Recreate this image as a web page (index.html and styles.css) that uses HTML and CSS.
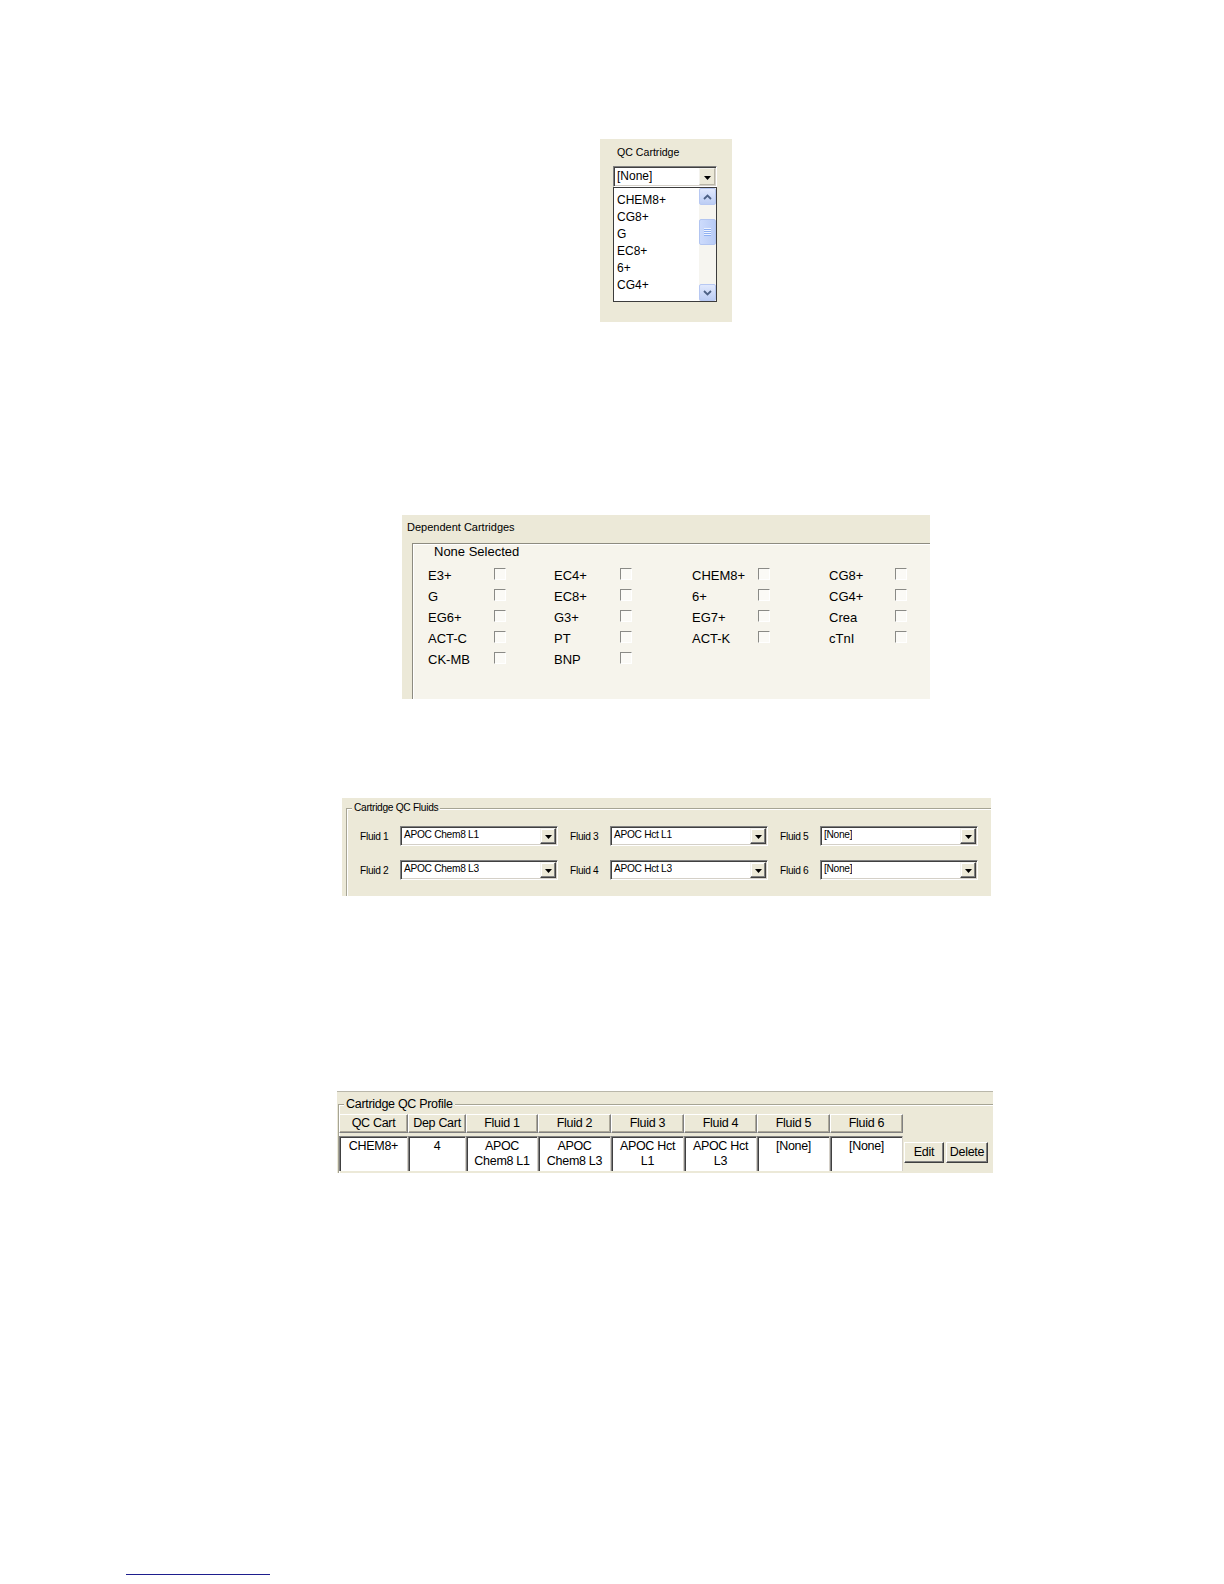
FILE: index.html
```html
<!DOCTYPE html>
<html lang="en">
<head>
<meta charset="utf-8">
<title>Cartridge QC</title>
<link rel="stylesheet" href="styles.css">
</head>
<body>
<main class="page">

  <section class="panel qc">
    <div class="qc-label">QC Cartridge</div>
    <div class="combo qc-combo">
      <span class="combo-text">[None]</span>
      <span class="dd-btn"><svg width="7" height="4" viewBox="0 0 7 4"><path d="M0 0H7L3.5 4Z"/></svg></span>
    </div>
    <div class="listbox">
      <ul class="list-items">
        <li>CHEM8+</li>
        <li>CG8+</li>
        <li>G</li>
        <li>EC8+</li>
        <li>6+</li>
        <li>CG4+</li>
      </ul>
      <div class="vscroll">
        <div class="sb-btn"><svg width="9" height="6" viewBox="0 0 9 6"><path d="M1 5L4.5 1.5L8 5" fill="none" stroke="#4d6185" stroke-width="1.8"/></svg></div>
        <div class="sb-track"><div class="sb-thumb"><span></span><span></span><span></span><span></span></div></div>
        <div class="sb-btn"><svg width="9" height="6" viewBox="0 0 9 6"><path d="M1 1L4.5 4.5L8 1" fill="none" stroke="#4d6185" stroke-width="1.8"/></svg></div>
      </div>
    </div>
  </section>

  <section class="panel dep">
    <div class="dep-title">Dependent Cartridges</div>
    <div class="dep-frame">
      <div class="dep-none">None Selected</div>
      <div class="dep-grid">
        <div class="opt"><span class="opt-name">E3+</span><span class="cb"></span></div>
        <div class="opt"><span class="opt-name">EC4+</span><span class="cb"></span></div>
        <div class="opt"><span class="opt-name">CHEM8+</span><span class="cb"></span></div>
        <div class="opt"><span class="opt-name">CG8+</span><span class="cb"></span></div>
        <div class="opt"><span class="opt-name">G</span><span class="cb"></span></div>
        <div class="opt"><span class="opt-name">EC8+</span><span class="cb"></span></div>
        <div class="opt"><span class="opt-name">6+</span><span class="cb"></span></div>
        <div class="opt"><span class="opt-name">CG4+</span><span class="cb"></span></div>
        <div class="opt"><span class="opt-name">EG6+</span><span class="cb"></span></div>
        <div class="opt"><span class="opt-name">G3+</span><span class="cb"></span></div>
        <div class="opt"><span class="opt-name">EG7+</span><span class="cb"></span></div>
        <div class="opt"><span class="opt-name">Crea</span><span class="cb"></span></div>
        <div class="opt"><span class="opt-name">ACT-C</span><span class="cb"></span></div>
        <div class="opt"><span class="opt-name">PT</span><span class="cb"></span></div>
        <div class="opt"><span class="opt-name">ACT-K</span><span class="cb"></span></div>
        <div class="opt"><span class="opt-name">cTnI</span><span class="cb"></span></div>
        <div class="opt"><span class="opt-name">CK-MB</span><span class="cb"></span></div>
        <div class="opt"><span class="opt-name">BNP</span><span class="cb"></span></div>
      </div>
    </div>
  </section>

  <section class="panel fluids">
    <fieldset class="gbox fl-box">
      <legend>Cartridge QC Fluids</legend>
      <div class="fl-grid">
        <div class="fl-field"><span class="fl-label">Fluid 1</span><div class="combo fl-combo"><span class="combo-text">APOC Chem8 L1</span><span class="dd-btn"><svg width="7" height="4" viewBox="0 0 7 4"><path d="M0 0H7L3.5 4Z"/></svg></span></div></div>
        <div class="fl-field"><span class="fl-label">Fluid 3</span><div class="combo fl-combo"><span class="combo-text">APOC Hct L1</span><span class="dd-btn"><svg width="7" height="4" viewBox="0 0 7 4"><path d="M0 0H7L3.5 4Z"/></svg></span></div></div>
        <div class="fl-field"><span class="fl-label">Fluid 5</span><div class="combo fl-combo"><span class="combo-text">[None]</span><span class="dd-btn"><svg width="7" height="4" viewBox="0 0 7 4"><path d="M0 0H7L3.5 4Z"/></svg></span></div></div>
        <div class="fl-field"><span class="fl-label">Fluid 2</span><div class="combo fl-combo"><span class="combo-text">APOC Chem8 L3</span><span class="dd-btn"><svg width="7" height="4" viewBox="0 0 7 4"><path d="M0 0H7L3.5 4Z"/></svg></span></div></div>
        <div class="fl-field"><span class="fl-label">Fluid 4</span><div class="combo fl-combo"><span class="combo-text">APOC Hct L3</span><span class="dd-btn"><svg width="7" height="4" viewBox="0 0 7 4"><path d="M0 0H7L3.5 4Z"/></svg></span></div></div>
        <div class="fl-field"><span class="fl-label">Fluid 6</span><div class="combo fl-combo"><span class="combo-text">[None]</span><span class="dd-btn"><svg width="7" height="4" viewBox="0 0 7 4"><path d="M0 0H7L3.5 4Z"/></svg></span></div></div>
      </div>
    </fieldset>
  </section>

  <section class="panel profile">
    <fieldset class="gbox pr-box">
      <legend>Cartridge QC Profile</legend>
      <div class="pr-head">
        <div class="th">QC Cart</div>
        <div class="th">Dep Cart</div>
        <div class="th">Fluid 1</div>
        <div class="th">Fluid 2</div>
        <div class="th">Fluid 3</div>
        <div class="th">Fluid 4</div>
        <div class="th">Fluid 5</div>
        <div class="th">Fluid 6</div>
      </div>
      <div class="pr-row">
        <div class="pr-cells">
          <div class="td">CHEM8+</div>
          <div class="td">4</div>
          <div class="td">APOC<br>Chem8 L1</div>
          <div class="td">APOC<br>Chem8 L3</div>
          <div class="td">APOC Hct<br>L1</div>
          <div class="td">APOC Hct<br>L3</div>
          <div class="td">[None]</div>
          <div class="td">[None]</div>
        </div>
        <div class="pr-btns">
          <button class="btn btn-edit">Edit</button>
          <button class="btn btn-delete">Delete</button>
        </div>
      </div>
    </fieldset>
  </section>

  <div class="foot-rule"></div>
</main>
</body>
</html>
```

FILE: styles.css
```css
* { box-sizing: border-box; }
html, body { margin: 0; padding: 0; background: #fff; }
body {
  width: 1224px;
  height: 1584px;
  overflow: hidden;
  font-family: "Liberation Sans", Arial, sans-serif;
  color: #000;
}
.page {
  display: flex;
  flex-direction: column;
  align-items: flex-start;
  padding-top: 139px;
}
.panel { background: #ECE9D8; flex: none; }

/* ---------- shared combo ---------- */
.combo {
  display: flex;
  align-items: flex-start;
  justify-content: space-between;
  background: #fff;
  border: 1px solid;
  border-color: #808080 #fff #fff #808080;
  box-shadow: inset 1px 1px 0 #404040, inset -1px -1px 0 #d4d0c8;
  padding: 1px;
}
.combo-text { padding-left: 2px; white-space: nowrap; overflow: hidden; }
.dd-btn {
  flex: none;
  width: 16px;
  height: 16px;
  display: flex;
  align-items: center;
  justify-content: center;
  background: #ECE9D8;
  border: 1px solid;
  border-color: #f4f3ee #404040 #404040 #f4f3ee;
  box-shadow: inset -1px -1px 0 #808080, inset 1px 1px 0 #fff;
}
.dd-btn svg { display: block; margin-top: 2px; }

/* ---------- QC Cartridge ---------- */
.qc {
  margin-left: 600px;
  width: 132px;
  height: 183px;
  padding: 6px 0 0 13px;
}
.qc-label {
  font-size: 10.6px;
  line-height: 14px;
  height: 21px;
  padding-left: 4px;
}
.qc-combo { width: 104px; height: 21px; font-size: 12px; line-height: 17px; }
.qc-combo .dd-btn { height: 17px; border-color: #f4f3ee #b8b5a6 #b8b5a6 #f4f3ee; box-shadow: none; }
.listbox {
  width: 104px;
  height: 115px;
  border: 1px solid #3c3c3c;
  background: #fff;
  display: flex;
}
.list-items {
  list-style: none;
  margin: 0;
  padding: 4px 0 0 3px;
  flex: 1;
  font-size: 12px;
  line-height: 17px;
}
.vscroll {
  width: 17px;
  display: flex;
  flex-direction: column;
  background: #f6f5f0;
}
.sb-btn {
  height: 17px;
  display: flex;
  align-items: center;
  justify-content: center;
  background: linear-gradient(#e1e9fd, #bccdf4);
  border: 1px solid #b7c8f2;
  border-radius: 2px;
}
.sb-track { flex: 1; padding-top: 14px; }
.sb-thumb {
  height: 26px;
  background: linear-gradient(90deg, #cddbfc, #b9ccf6);
  border: 1px solid #b2c5f1;
  border-radius: 2px;
  display: flex;
  flex-direction: column;
  align-items: center;
  justify-content: center;
}
.sb-thumb span {
  width: 7px;
  height: 2px;
  background: #eef3fe;
  border-bottom: 1px solid #8fb0f2;
}

/* ---------- Dependent Cartridges ---------- */
.dep {
  margin-top: 193px;
  margin-left: 402px;
  width: 528px;
  height: 184px;
  padding-top: 5px;
  display: flex;
  flex-direction: column;
}
.dep-title {
  font-size: 11px;
  line-height: 14px;
  height: 23px;
  padding-left: 5px;
}
.dep-frame {
  flex: 1;
  margin-left: 10px;
  background: #f6f4ec;
  border-top: 1px solid #8d8b80;
  border-left: 1px solid #8d8b80;
  box-shadow: inset 1px 1px 0 #fff;
  padding-left: 15px;
}
.dep-none { font-size: 13px; line-height: 16px; margin-left: 6px; }
.dep-grid {
  display: grid;
  grid-template-columns: 126px 138px 137px 1fr;
  grid-auto-rows: 21px;
  margin-top: 5px;
  font-size: 13px;
}
.opt { display: flex; align-items: center; }
.opt-name { width: 66px; line-height: 16px; }
.cb {
  width: 12px;
  height: 12px;
  margin-top: -3px;
  background: #fbfaf6;
  border: 1px solid;
  border-color: #8a8a86 #fff #fff #8a8a86;
}

/* ---------- group boxes ---------- */
.gbox {
  margin: 0;
  padding: 0;
  border: 0;
  border-top: 1px solid #a6a494;
  border-left: 1px solid #a6a494;
  box-shadow: inset 1px 1px 0 #fff;
  min-width: 0;
}
.gbox legend {
  background: #ECE9D8;
  padding: 0 2px;
  margin-left: 5px;
}

/* ---------- Cartridge QC Fluids ---------- */
.fluids {
  margin-top: 99px;
  margin-left: 342px;
  width: 649px;
  height: 98px;
  padding: 4px 0 0 4px;
  font-size: 10.2px;
  letter-spacing: -0.3px;
}
.fl-box { height: 94px; }
.fl-box legend { line-height: 12px; }
.fl-grid {
  display: grid;
  grid-template-columns: repeat(3, 198px);
  grid-auto-rows: 20px;
  column-gap: 12px;
  row-gap: 14px;
  padding: 12px 0 0 13px;
}
.fl-field { display: flex; align-items: center; }
.fl-label { width: 40px; }
.fl-combo { width: 158px; height: 20px; line-height: 13px; }

/* ---------- Cartridge QC Profile ---------- */
.profile {
  margin-top: 195px;
  margin-left: 337px;
  width: 656px;
  height: 82px;
  padding: 5px 0 0 1px;
  border-top: 1px solid #b9b7aa;
  font-size: 12.5px;
  letter-spacing: -0.3px;
}
.pr-box { height: 76px; }
.pr-box legend { line-height: 14px; }
.pr-head, .pr-cells {
  display: grid;
  grid-template-columns: 69px 58px 72px repeat(5, 73px);
}
.pr-head { margin-top: 3px; height: 19px; }
.th {
  line-height: 17px;
  text-align: center;
  white-space: nowrap;
  background: #ECE9D8;
  border: 1px solid;
  border-color: #fff #808080 #808080 #fff;
  box-shadow: inset -1px -1px 0 #aca899;
}
.pr-row { display: flex; margin-top: 3px; height: 35px; }
.td {
  background: #fff;
  line-height: 15px;
  text-align: center;
  white-space: nowrap;
  padding-top: 2px;
  border-top: 1px solid #808080;
  border-left: 1px solid #808080;
  border-right: 1px solid #d4d0c8;
  box-shadow: inset 1px 1px 0 #404040;
}
.pr-btns {
  display: flex;
  gap: 2px;
  margin-left: 1px;
  margin-top: 6px;
  align-self: flex-start;
}
.btn {
  font-family: inherit;
  font-size: inherit;
  letter-spacing: inherit;
  line-height: 17px;
  height: 21px;
  padding: 0;
  margin: 0;
  color: #000;
  background: #ECE9D8;
  border: 1px solid;
  border-color: #fff #404040 #404040 #fff;
  box-shadow: inset -1px -1px 0 #808080;
}
.btn-edit { width: 40px; }
.btn-delete { width: 42px; }

/* ---------- footnote rule ---------- */
.foot-rule {
  margin-top: 401px;
  margin-left: 126px;
  width: 144px;
  height: 1px;
  background: #1e1e8e;
}
```
